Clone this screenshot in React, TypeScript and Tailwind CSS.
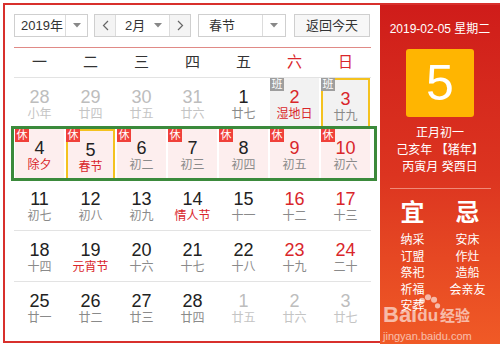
import React from "react";

type Cell = {
  d: number;
  l: string;
  o?: boolean; // other month
  red?: boolean; // red number
  lred?: boolean; // red lunar
  badge?: "ban" | "xiu";
  gray?: boolean;
  sel?: boolean;
};

const rows: Cell[][] = [
  [
    { d: 28, l: "小年", o: true },
    { d: 29, l: "廿四", o: true },
    { d: 30, l: "廿五", o: true },
    { d: 31, l: "廿六", o: true },
    { d: 1, l: "廿七" },
    { d: 2, l: "湿地日", red: true, lred: true, badge: "ban", gray: true },
    { d: 3, l: "廿九", red: true, badge: "ban", gray: true, sel: true },
  ],
  [
    { d: 4, l: "除夕", lred: true, badge: "xiu" },
    { d: 5, l: "春节", lred: true, badge: "xiu", sel: true },
    { d: 6, l: "初二", badge: "xiu" },
    { d: 7, l: "初三", badge: "xiu" },
    { d: 8, l: "初四", badge: "xiu" },
    { d: 9, l: "初五", red: true, badge: "xiu" },
    { d: 10, l: "初六", red: true, badge: "xiu" },
  ],
  [
    { d: 11, l: "初七" },
    { d: 12, l: "初八" },
    { d: 13, l: "初九" },
    { d: 14, l: "情人节", lred: true },
    { d: 15, l: "十一" },
    { d: 16, l: "十二", red: true },
    { d: 17, l: "十三", red: true },
  ],
  [
    { d: 18, l: "十四" },
    { d: 19, l: "元宵节", lred: true },
    { d: 20, l: "十六" },
    { d: 21, l: "十七" },
    { d: 22, l: "十八" },
    { d: 23, l: "十九", red: true },
    { d: 24, l: "二十", red: true },
  ],
  [
    { d: 25, l: "廿一" },
    { d: 26, l: "廿二" },
    { d: 27, l: "廿三" },
    { d: 28, l: "廿四" },
    { d: 1, l: "廿五", o: true },
    { d: 2, l: "廿六", o: true },
    { d: 3, l: "廿七", o: true },
  ],
];

const weekdays = ["一", "二", "三", "四", "五", "六", "日"];

function Arrow() {
  return (
    <svg width="8" height="5" viewBox="0 0 8 5">
      <path d="M0 0 L8 0 L4 4.5 Z" fill="#888" />
    </svg>
  );
}

function DayCell({ c, pink }: { c: Cell; pink: boolean }) {
  let bg = "";
  if (pink) bg = "bg-[#fdeeee]";
  if (c.gray) bg = "bg-[#f2f2f2]";
  const numColor = c.o ? "text-[#bdbdbd]" : c.red ? "text-[#d9262b]" : "text-[#222]";
  const lunColor = c.o ? "text-[#c4c4c4]" : c.lred ? "text-[#d9262b]" : "text-[#8a8a8a]";
  return (
    <div className="relative h-full px-[1px]">
      <div
        className={`relative h-full flex flex-col items-center pt-[9px] ${bg} ${
          c.sel ? "border-2 border-[#f4c21f] pt-[7px]" : ""
        }`}
      >
        {c.badge && (
          <div
            className={`absolute ${c.sel ? "left-[-2px] top-[-2px]" : "left-0 top-0"} w-[14px] h-[13px] flex items-center justify-center text-white text-[11px] leading-none ${
              c.badge === "ban" ? "bg-[#9e9e9e]" : "bg-[#f0403a]"
            }`}
          >
            {c.badge === "ban" ? "班" : "休"}
          </div>
        )}
        <div className={`text-[18px] leading-[20px] ${numColor}`}>{c.d}</div>
        <div className={`text-[12px] leading-[14px] whitespace-nowrap ${lunColor}`}>{c.l}</div>
      </div>
    </div>
  );
}

export default function App() {
  return (
    <div className="w-[500px] h-[347px] bg-white overflow-hidden pt-[3px] pl-[3px] font-[family-name:Liberation_Sans,Noto_Sans_CJK_SC,sans-serif]">
      <div className="flex h-[340px] border-2 border-r-0 border-b-0 border-[#d8302c]">
        {/* Left panel */}
        <div className="w-[375px] h-full bg-white flex flex-col px-[9px] pt-[9px] border-b-2 border-[#d8302c]">
          {/* Controls */}
          <div className="flex h-[23px] text-[13px] text-[#333] whitespace-nowrap">
            <div className="w-[74px] h-full flex border border-[#cfcfcf] bg-white">
              <div className="flex-1 flex items-center pl-[6px] whitespace-nowrap">2019年</div>
              <div className="w-[22px] shrink-0 border-l border-[#dcdcdc] flex items-center justify-center">
                <Arrow />
              </div>
            </div>
            <div className="ml-[6px] w-[97px] h-full flex border border-[#cfcfcf]">
              <div className="w-[21px] shrink-0 bg-[#f4f4f4] border-r border-[#dcdcdc] flex items-center justify-center">
                <svg width="7" height="11" viewBox="0 0 7 11">
                  <path d="M6 1 L1.5 5.5 L6 10" fill="none" stroke="#666" strokeWidth="1.2" />
                </svg>
              </div>
              <div className="flex-1 flex items-center pl-[9px] bg-white">
                <span className="flex-1">2月</span>
                <span className="pr-[7px] flex items-center">
                  <Arrow />
                </span>
              </div>
              <div className="w-[21px] shrink-0 bg-[#f4f4f4] border-l border-[#dcdcdc] flex items-center justify-center">
                <svg width="7" height="11" viewBox="0 0 7 11">
                  <path d="M1 1 L5.5 5.5 L1 10" fill="none" stroke="#666" strokeWidth="1.2" />
                </svg>
              </div>
            </div>
            <div className="ml-[7px] w-[88px] h-full flex border border-[#cfcfcf] bg-white">
              <div className="flex-1 flex items-center pl-[10px]">春节</div>
              <div className="w-[23px] shrink-0 border-l border-[#dcdcdc] flex items-center justify-center">
                <Arrow />
              </div>
            </div>
            <div className="ml-[8px] w-[76px] h-full border border-[#cfcfcf] bg-[#f7f7f7] flex items-center justify-center">
              返回今天
            </div>
          </div>
          <div className="mt-[10px] h-[1px] bg-[#e08a86]" />
          {/* Weekday header */}
          <div className="grid grid-cols-7 h-[30px] border-b border-[#e3e3e3] text-[15px]">
            {weekdays.map((w, i) => (
              <div
                key={w}
                className={`flex items-center justify-center ${i >= 5 ? "text-[#d9262b]" : "text-[#333]"}`}
              >
                {w}
              </div>
            ))}
          </div>
          {/* Rows */}
          {rows.map((r, ri) => (
            <div
              key={ri}
              className={`relative grid grid-cols-7 h-[51px] ${
                ri >= 2 && ri < 4 ? "border-b border-[#e3e3e3]" : ""
              }`}
            >
              {r.map((c, ci) => (
                <DayCell key={ci} c={c} pink={ri === 1} />
              ))}
              {ri === 1 && (
                <div className="absolute left-[-3px] right-[-6px] top-[-3px] bottom-[-1px] border-[3px] border-[#3b8a3b] pointer-events-none" />
              )}
            </div>
          ))}
        </div>
        {/* Right panel */}
        <div className="relative flex-1 h-[339px] bg-gradient-to-b from-[#cf1c1a] via-[#dc3420] to-[#f05a26] text-white flex flex-col items-center">
          <div className="mt-[15px] text-[12px] leading-[18px] whitespace-nowrap">2019-02-05 星期二</div>
          <div className="mt-[11px] w-[68px] h-[68px] rounded-[3px] bg-[#ffb501] flex items-center justify-center text-[50px] leading-none font-[family-name:Liberation_Sans,sans-serif]">
            5
          </div>
          <div className="mt-[8px] text-[12px] leading-[17px] text-center">
            <div>正月初一</div>
            <div>己亥年 【猪年】</div>
            <div>丙寅月 癸酉日</div>
          </div>
          <div className="mt-[12px] w-[101px] h-[1px] bg-[#f08a78]" />
          <div className="mt-[10px] w-full grid grid-cols-2 px-[5px]">
            <div className="flex flex-col items-center">
              <div className="text-[24px] leading-[28px] font-bold mb-[5px]">宜</div>
              {["纳采", "订盟", "祭祀", "祈福", "安葬"].map((t) => (
                <div key={t} className="text-[12px] leading-[16.5px]">
                  {t}
                </div>
              ))}
            </div>
            <div className="flex flex-col items-center">
              <div className="text-[24px] leading-[28px] font-bold mb-[5px]">忌</div>
              {["安床", "作灶", "造船", "会亲友"].map((t) => (
                <div key={t} className="text-[12px] leading-[16.5px]">
                  {t}
                </div>
              ))}
            </div>
          </div>
          {/* Watermark */}
          <div className="absolute left-[3px] top-[299px] opacity-60 pointer-events-none">
            <div className="flex items-end">
              <span className="text-[22px] leading-[22px] font-bold text-white">Bai</span>
              <span className="relative inline-flex items-end">
                <svg width="26" height="26" viewBox="0 0 30 30" className="absolute left-[-2px] top-[-14px]">
                  <circle cx="8" cy="10" r="3.5" fill="white" />
                  <circle cx="15" cy="6" r="3.5" fill="white" />
                  <circle cx="22" cy="9" r="3.5" fill="white" />
                  <circle cx="26" cy="16" r="3" fill="white" />
                </svg>
                <span className="text-[17px] leading-[20px] font-bold text-white">du</span>
              </span>
              <span className="ml-[2px] text-[15px] leading-[20px] font-bold text-white">经验</span>
            </div>
            <div className="text-[11px] leading-[14px] text-white mt-[3px]">jingyan.baidu.com</div>
          </div>
        </div>
      </div>
    </div>
  );
}
